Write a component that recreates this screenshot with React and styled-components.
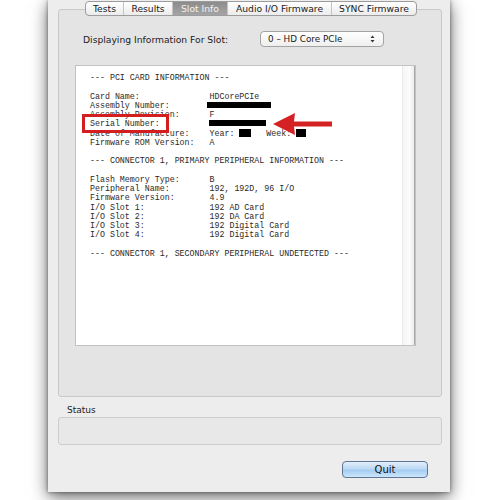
import styled, { createGlobalStyle } from "styled-components";

const Global = createGlobalStyle`
  html, body {
    margin: 0;
    padding: 0;
    background: #ffffff;
  }
  body {
    width: 500px;
    height: 500px;
    overflow: hidden;
    font-family: "DejaVu Sans", "Liberation Sans", sans-serif;
  }
`;

const Page = styled.div`
  width: 500px;
  height: 500px;
  padding-left: 48px;
  box-sizing: border-box;
`;

const Window = styled.div`
  width: 402px;
  height: 492px;
  background: #ededed;
  box-shadow: 0 5px 16px rgba(0, 0, 0, 0.6), 0 0 4px rgba(0, 0, 0, 0.45);
  display: flex;
  flex-direction: column;
  padding: 1px 8px 0 10px;
  box-sizing: border-box;
`;

const TabBar = styled.div`
  display: flex;
  align-self: flex-start;
  margin-left: 27px;
  height: 13px;
  position: relative;
  z-index: 2;
  border: 1px solid #9c9c9c;
  border-radius: 4px;
  overflow: hidden;
  background: linear-gradient(#ffffff, #ececec);
`;

const Tab = styled.div`
  width: ${(p) => p.$w}px;
  height: 13px;
  line-height: 13px;
  font-size: 9.2px;
  text-align: center;
  color: ${(p) => (p.$active ? "#f2f2f2" : "#1a1a1a")};
  background: ${(p) =>
    p.$active ? "linear-gradient(#8c8c8c, #a4a4a4)" : "transparent"};
  border-right: ${(p) => (p.$last ? "none" : "1px solid #c4c4c4")};
  box-sizing: border-box;
  white-space: nowrap;
`;

const GroupBox = styled.div`
  width: 384px;
  height: 388px;
  margin-top: -7px;
  background: #e4e4e4;
  border: 1px solid #c9c9c9;
  border-radius: 3px;
  box-sizing: border-box;
  display: flex;
  flex-direction: column;
  padding: 21px 0 0 16px;
`;

const SlotRow = styled.div`
  display: flex;
  align-items: center;
  height: 16px;
`;

const SlotLabel = styled.div`
  width: 177px;
  padding-left: 8px;
  font-size: 9.2px;
  color: #1c1c1c;
  white-space: nowrap;
`;

const Popup = styled.div`
  width: 124px;
  height: 16px;
  border: 1px solid #a3a3a3;
  border-radius: 4px;
  background: linear-gradient(#ffffff, #efefef);
  box-sizing: border-box;
  display: flex;
  align-items: center;
  justify-content: space-between;
  padding: 0 8px 0 7px;
  font-size: 8.8px;
  color: #1a1a1a;
`;

const InfoFrame = styled.div`
  position: relative;
  display: flex;
  width: 341px;
  height: 281px;
  margin-top: 18px;
  border: 1px solid #c2c2c2;
  box-sizing: border-box;
  background: #ffffff;
`;

const InfoText = styled.div`
  flex: 1;
  padding: 7px 0 0 14px;
  font-family: "Liberation Mono", "DejaVu Sans Mono", monospace;
  font-size: 8.3px;
  line-height: 9.26px;
  color: #2a2a2a;
`;

const Line = styled.div`
  display: flex;
  height: 9.26px;
  white-space: pre;
`;

const Key = styled.span`
  width: 24ch;
  flex: none;
`;

const Value = styled.span`
  white-space: pre;
`;

const Redact = styled.span`
  display: inline-block;
  background: #000;
  width: ${(p) => p.$w}px;
  height: ${(p) => p.$h || 6}px;
  margin-left: ${(p) => p.$ml || 0}px;
  margin-top: ${(p) => p.$mt ?? 1}px;
  vertical-align: top;
`;

const ScrollTrack = styled.div`
  width: 13px;
  background: linear-gradient(90deg, #f6f6f6, #fbfbfb 60%, #ececec);
  border-left: 1px solid #eaeaea;
  border-right: 1px solid #a8a8a8;
  box-sizing: border-box;
`;

const Highlight = styled.div`
  position: absolute;
  left: 6px;
  top: 48px;
  width: 87px;
  height: 19px;
  border: 3.5px solid #d31d1f;
  box-sizing: border-box;
`;

const Arrow = styled.svg`
  position: absolute;
  left: 197px;
  top: 47px;
`;

const StatusLabel = styled.div`
  margin: 8px 0 0 9px;
  font-size: 9px;
  color: #1c1c1c;
  height: 11px;
  line-height: 11px;
`;

const StatusBox = styled.div`
  width: 384px;
  height: 28px;
  margin-top: 1px;
  background: #e8e8e8;
  border: 1px solid #cdcdcd;
  border-radius: 3px;
  box-sizing: border-box;
`;

const ButtonRow = styled.div`
  display: flex;
  justify-content: flex-end;
  padding-right: 14px;
  margin-top: 16px;
`;

const QuitButton = styled.div`
  width: 86px;
  height: 17px;
  border: 1px solid #5f7594;
  border-radius: 4px;
  box-sizing: border-box;
  background: linear-gradient(#e3eefb 0%, #bcd9f4 45%, #a4cdf2 55%, #cbe5fb 100%);
  font-size: 10px;
  line-height: 15px;
  text-align: center;
  color: #111;
`;

const tabs = [
  { label: "Tests", w: 38 },
  { label: "Results", w: 49 },
  { label: "Slot Info", w: 55, active: true },
  { label: "Audio I/O Firmware", w: 104 },
  { label: "SYNC Firmware", w: 84 },
];

const Updown = () => (
  <svg width="5" height="8" viewBox="0 0 5 8">
    <path d="M2.5 0.5 L4.5 3 L0.5 3 Z" fill="#333" />
    <path d="M2.5 7.5 L4.5 5 L0.5 5 Z" fill="#333" />
  </svg>
);

export default function App() {
  return (
    <>
      <Global />
      <Page>
        <Window>
          <TabBar>
            {tabs.map((t, i) => (
              <Tab key={t.label} $w={t.w} $active={t.active} $last={i === tabs.length - 1}>
                {t.label}
              </Tab>
            ))}
          </TabBar>
          <GroupBox>
            <SlotRow>
              <SlotLabel>Displaying Information For Slot:</SlotLabel>
              <Popup>
                <span>0 – HD Core PCIe</span>
                <Updown />
              </Popup>
            </SlotRow>
            <InfoFrame>
              <InfoText>
                <Line>--- PCI CARD INFORMATION ---</Line>
                <Line> </Line>
                <Line><Key>Card Name:</Key><Value>HDCorePCIe</Value></Line>
                <Line><Key>Assembly Number:</Key><Value><Redact $w={64} $ml={-2} /></Value></Line>
                <Line><Key>Assembly Revision:</Key><Value>F</Value></Line>
                <Line><Key>Serial Number:</Key><Value><Redact $w={57} /></Value></Line>
                <Line>
                  <Key>Date of Manufacture:</Key>
                  <Value>
                    {"Year: "}<Redact $w={12} $h={8} $mt={0} />{"   Week: "}<Redact $w={10} $h={8} $mt={0} />
                  </Value>
                </Line>
                <Line><Key>Firmware ROM Version:</Key><Value>A</Value></Line>
                <Line> </Line>
                <Line>--- CONNECTOR 1, PRIMARY PERIPHERAL INFORMATION ---</Line>
                <Line> </Line>
                <Line><Key>Flash Memory Type:</Key><Value>B</Value></Line>
                <Line><Key>Peripheral Name:</Key><Value>192, 192D, 96 I/O</Value></Line>
                <Line><Key>Firmware Version:</Key><Value>4.9</Value></Line>
                <Line><Key>I/O Slot 1:</Key><Value>192 AD Card</Value></Line>
                <Line><Key>I/O Slot 2:</Key><Value>192 DA Card</Value></Line>
                <Line><Key>I/O Slot 3:</Key><Value>192 Digital Card</Value></Line>
                <Line><Key>I/O Slot 4:</Key><Value>192 Digital Card</Value></Line>
                <Line> </Line>
                <Line>--- CONNECTOR 1, SECONDARY PERIPHERAL UNDETECTED ---</Line>
              </InfoText>
              <ScrollTrack />
              <Highlight />
              <Arrow width="60" height="22" viewBox="0 0 60 22">
                <path d="M0 11 L22 0 L21 8.5 L59 8.5 L59 13.5 L21 13.5 L22 22 Z" fill="#d42224" />
              </Arrow>
            </InfoFrame>
          </GroupBox>
          <StatusLabel>Status</StatusLabel>
          <StatusBox />
          <ButtonRow>
            <QuitButton>Quit</QuitButton>
          </ButtonRow>
        </Window>
      </Page>
    </>
  );
}
